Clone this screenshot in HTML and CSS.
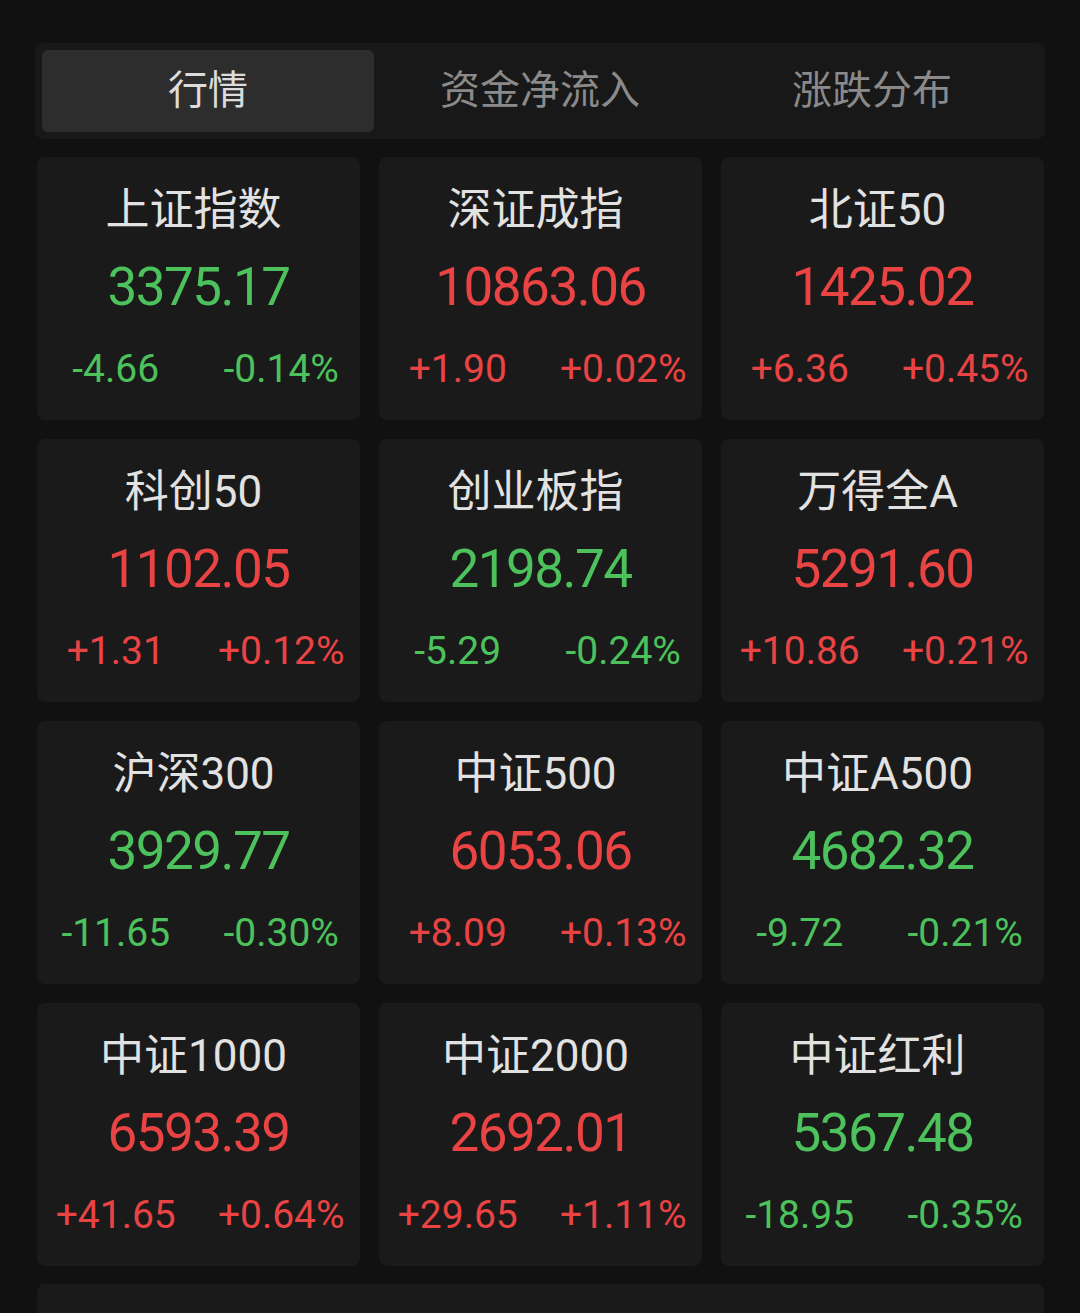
FILE: index.html
```html
<!DOCTYPE html>
<html lang="zh-CN">
<head>
  <meta charset="UTF-8">
  <title>行情</title>
  <link rel="stylesheet" href="styles.css">
</head>
<body>
  <div class="page">
    <div class="tabs">
      <div class="tab active">行情</div>
      <div class="tab">资金净流入</div>
      <div class="tab">涨跌分布</div>
    </div>

    <div class="grid">
      <div class="card">
        <div class="name">上证指数</div>
        <div class="price down">3375.17</div>
        <div class="change down"><span>-4.66</span><span>-0.14%</span></div>
      </div>
      <div class="card">
        <div class="name">深证成指</div>
        <div class="price up">10863.06</div>
        <div class="change up"><span>+1.90</span><span>+0.02%</span></div>
      </div>
      <div class="card">
        <div class="name">北证50</div>
        <div class="price up">1425.02</div>
        <div class="change up"><span>+6.36</span><span>+0.45%</span></div>
      </div>

      <div class="card">
        <div class="name">科创50</div>
        <div class="price up">1102.05</div>
        <div class="change up"><span>+1.31</span><span>+0.12%</span></div>
      </div>
      <div class="card">
        <div class="name">创业板指</div>
        <div class="price down">2198.74</div>
        <div class="change down"><span>-5.29</span><span>-0.24%</span></div>
      </div>
      <div class="card">
        <div class="name">万得全A</div>
        <div class="price up">5291.60</div>
        <div class="change up"><span>+10.86</span><span>+0.21%</span></div>
      </div>

      <div class="card">
        <div class="name">沪深300</div>
        <div class="price down">3929.77</div>
        <div class="change down"><span>-11.65</span><span>-0.30%</span></div>
      </div>
      <div class="card">
        <div class="name">中证500</div>
        <div class="price up">6053.06</div>
        <div class="change up"><span>+8.09</span><span>+0.13%</span></div>
      </div>
      <div class="card">
        <div class="name">中证A500</div>
        <div class="price down">4682.32</div>
        <div class="change down"><span>-9.72</span><span>-0.21%</span></div>
      </div>

      <div class="card">
        <div class="name">中证1000</div>
        <div class="price up">6593.39</div>
        <div class="change up"><span>+41.65</span><span>+0.64%</span></div>
      </div>
      <div class="card">
        <div class="name">中证2000</div>
        <div class="price up">2692.01</div>
        <div class="change up"><span>+29.65</span><span>+1.11%</span></div>
      </div>
      <div class="card">
        <div class="name">中证红利</div>
        <div class="price down">5367.48</div>
        <div class="change down"><span>-18.95</span><span>-0.35%</span></div>
      </div>
    </div>

    <div class="panel"></div>
  </div>
</body>
</html>
```

FILE: styles.css
```css
body {
  margin: 0;
  background-color: #111111;
  font-family: Roboto, "Noto Sans CJK SC", sans-serif;
  color: #e4e4e4;
  overflow: hidden;
}
.page {
  padding: 43px 35px 0 35px;
}
.tabs {
  display: grid;
  grid-template-columns: repeat(3, 1fr);
  padding: 7px;
  background-color: #181818;
  border-radius: 8px;
}
.tab {
  height: 82px;
  line-height: 82px;
  text-align: center;
  font-size: 40px;
  color: #8a8a8a;
  border-radius: 6px;
}
.tab.active {
  background-color: #2d2d2d;
  color: #dcdcdc;
}
.grid {
  display: grid;
  grid-template-columns: repeat(3, 1fr);
  grid-auto-rows: 263px;
  column-gap: 19px;
  row-gap: 19px;
  margin: 18px 1px 0 2px;
}
.card {
  background-color: #1a1a1a;
  border-radius: 8px;
  text-align: center;
  padding-top: 23px;
  box-sizing: border-box;
}
.name {
  font-size: 44px;
  line-height: 60px;
  padding-right: 10px;
  color: #e2e2e2;
}
.price {
  margin-top: 12px;
  font-size: 53px;
  line-height: 70px;
  letter-spacing: -1.5px;
}
.change {
  display: grid;
  grid-template-columns: 1fr 1fr;
  column-gap: 8px;
  margin-top: 22px;
  font-size: 39px;
  line-height: 50px;
}
.up {
  color: #e94343;
}
.down {
  color: #4cc15c;
}
.panel {
  height: 60px;
  margin: 18px 1px 0 2px;
  background-color: #1a1a1a;
  border-radius: 8px 8px 0 0;
}
```
